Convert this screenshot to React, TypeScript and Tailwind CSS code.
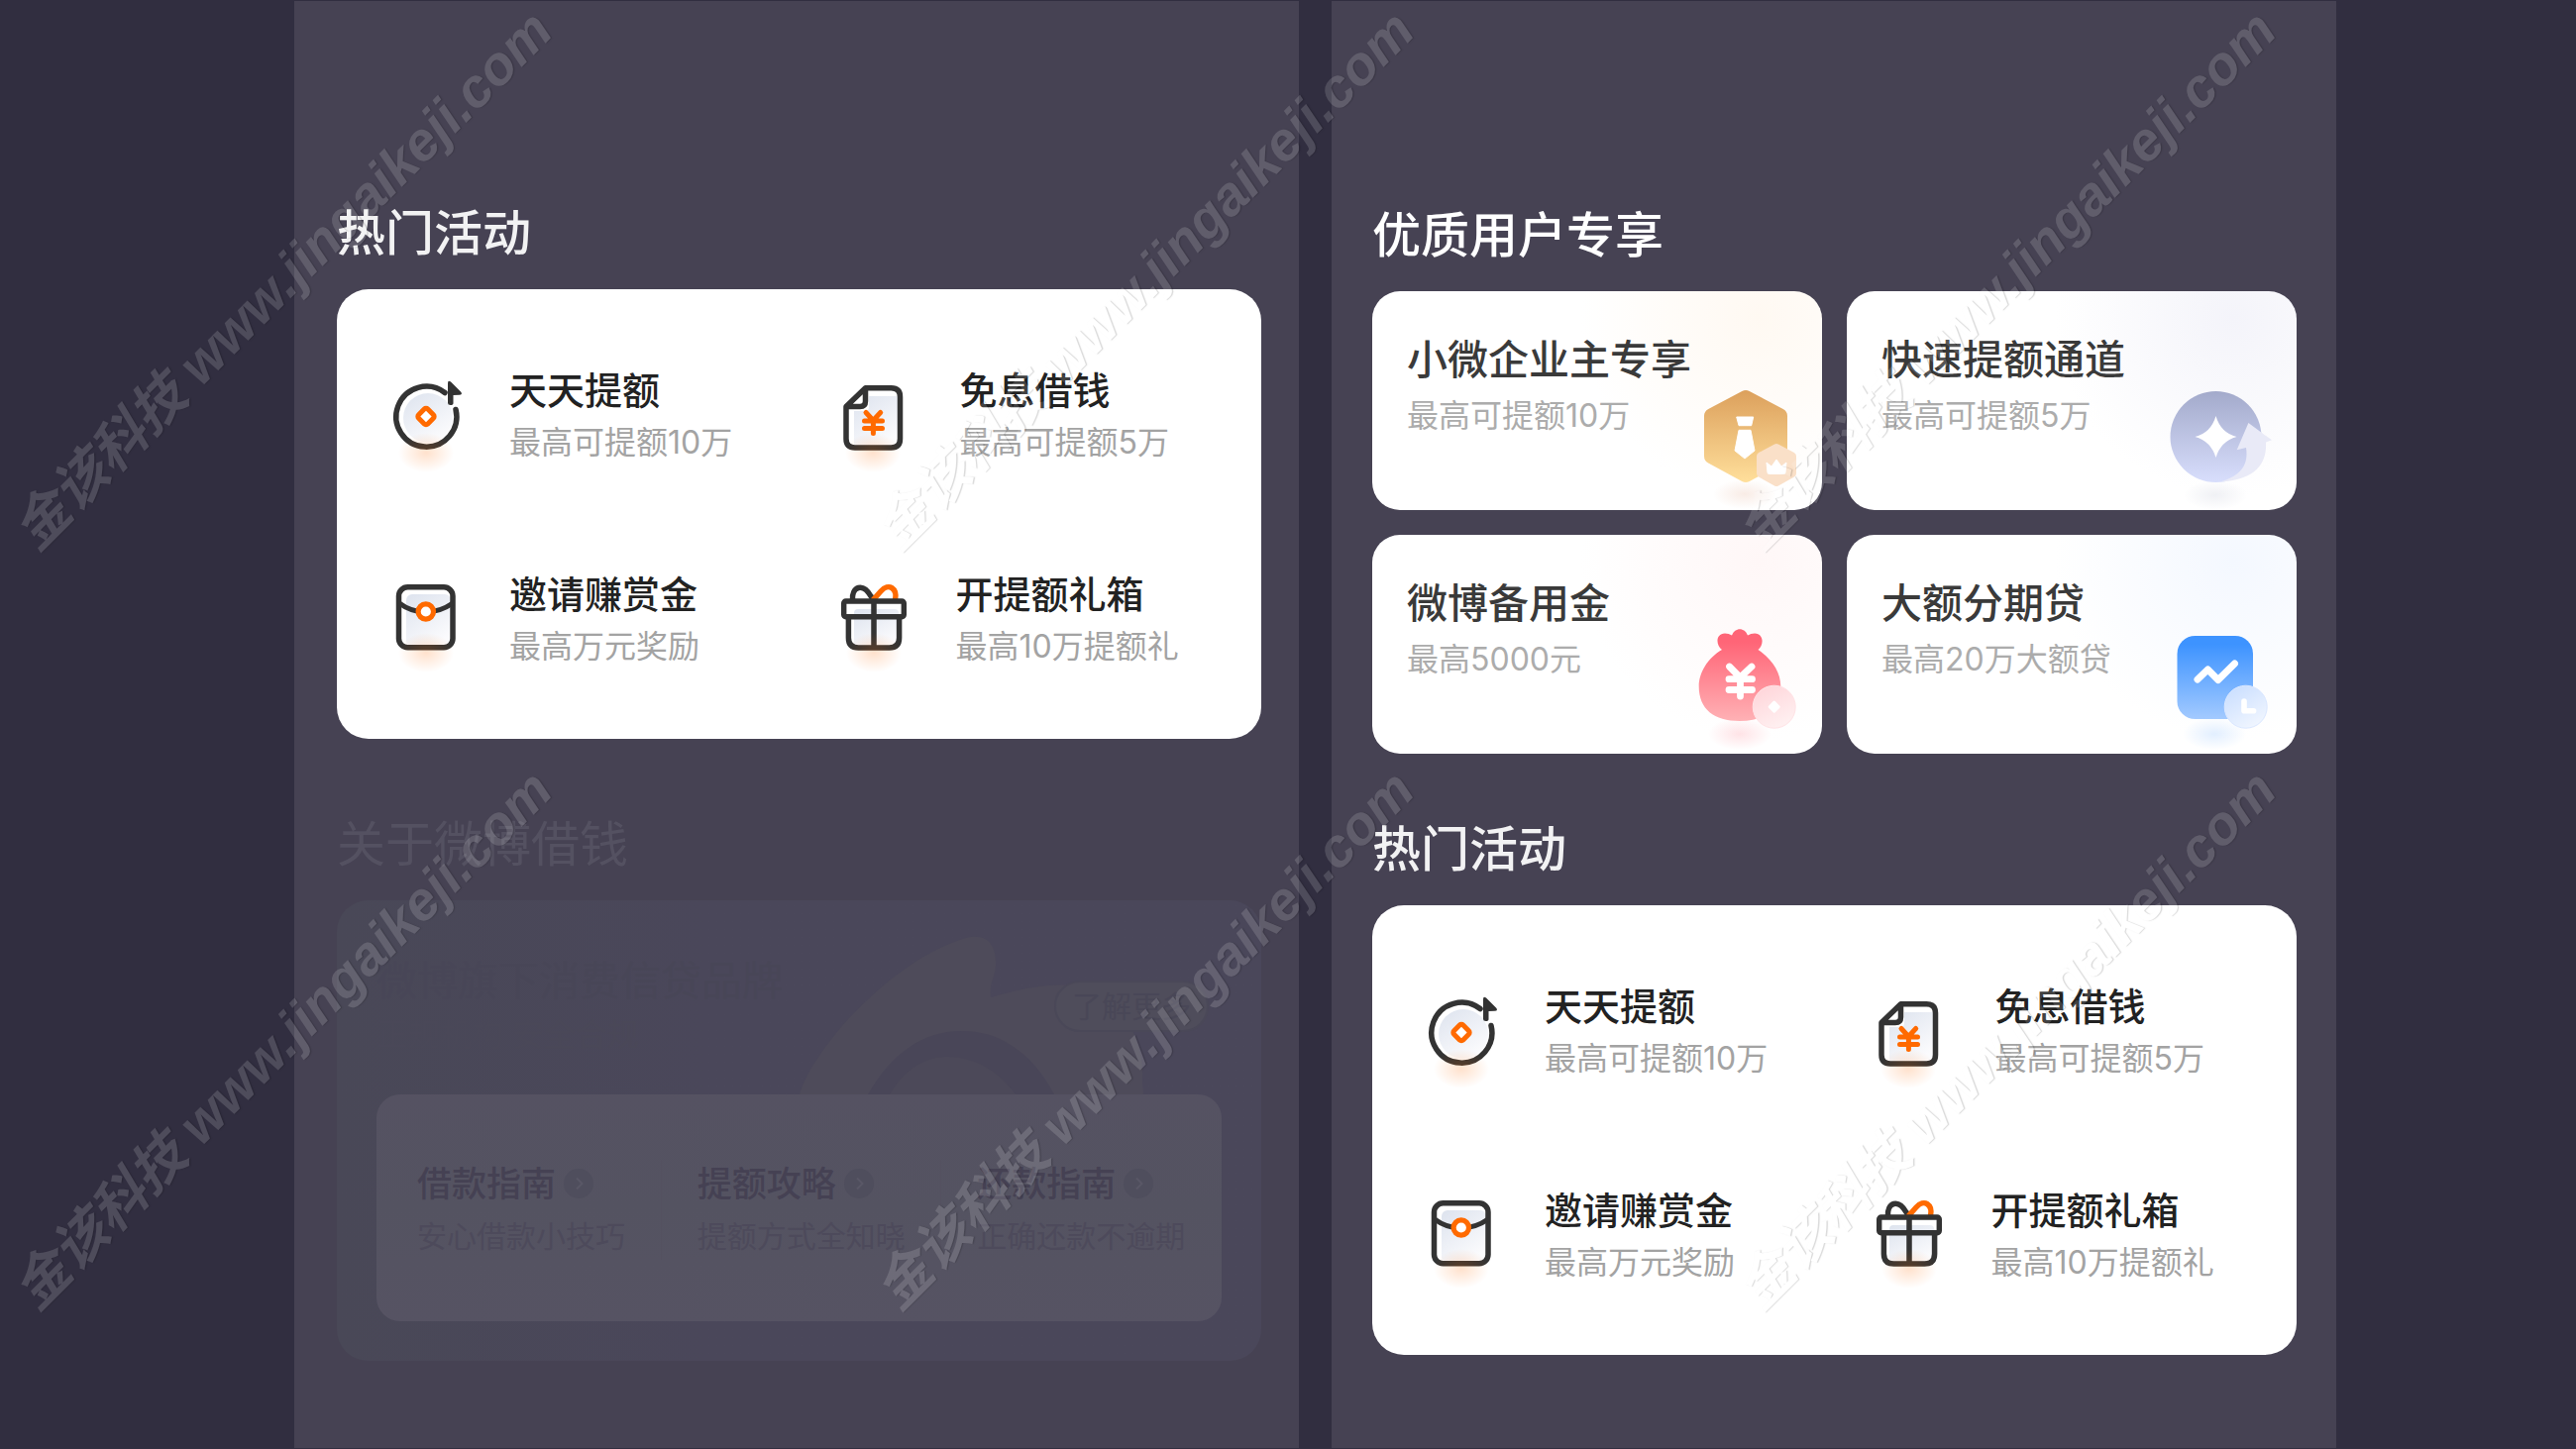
import React from "react";

const Glow = ({ id, color, cx = 48, cy = 90, rx = 28, ry = 20, opacity = 0.2 }: any) => (
  <>
    <defs>
      <radialGradient id={id}>
        <stop offset="0" stopColor={color} stopOpacity={opacity} />
        <stop offset="0.4" stopColor={color} stopOpacity={opacity * 0.6} />
        <stop offset="1" stopColor={color} stopOpacity="0" />
      </radialGradient>
    </defs>
    <ellipse cx={cx} cy={cy} rx={rx} ry={ry} fill={`url(#${id})`} />
  </>
);

const Shade = ({ id }: { id: string }) => (
  <defs>
    <linearGradient id={id} x1="0" y1="0" x2="0.6" y2="1">
      <stop offset="0" stopColor="#dde3ee" />
      <stop offset="1" stopColor="#fbfbfd" />
    </linearGradient>
  </defs>
);

const CoinIcon = ({ id }: { id: string }) => (
  <svg width="96" height="104" viewBox="0 0 96 104" fill="none" className="shrink-0 overflow-visible">
    <Shade id={`${id}-shade`} />
    <circle cx="50" cy="55" r="25" fill={`url(#${id}-shade)`} />
    <path d="M67 29.5 A30.5 30.5 0 1 0 78 46.5" stroke="#333" strokeWidth="5.5" strokeLinecap="round" />
    <path d="M70 20 Q70 16.500 73 18.500 L83 28.500 Q85.500 31.500 81.500 31.800 L75.500 32 V40 Q75.500 42 72.700 42 Q70 42 70 40 Z" fill="#333" />
    <rect x="41.500" y="47" width="13" height="13" rx="2.500" transform="rotate(45 48 53.500)" stroke="#ff6a00" strokeWidth="5" fill="#fff" />
    <Glow id={`${id}-glow`} color="#ff6a00" />
  </svg>
);

const BillIcon = ({ id }: { id: string }) => (
  <svg width="100" height="104" viewBox="0 0 100 104" fill="none" className="shrink-0 overflow-visible">
    <Shade id={`${id}-shade`} />
    <path d="M44 33 H73 V83 H29 V48 H40 Q44 48 44 44 Z" fill={`url(#${id}-shade)`} />
    <path
      d="M40.500 24.800 H66.500 Q75.500 24.800 75.500 33.800 V76 Q75.500 85 66.500 85 H30 Q21 85 21 76 V43.500 Z M40.500 24.800 V38 Q40.500 43.500 35 43.500 H21"
      stroke="#333"
      strokeWidth="5.5"
      strokeLinejoin="round"
    />
    <path d="M41 49.500 L48.300 57.500 L55.700 49.500 M39.500 58 H57.500 M39.500 65.500 H57.500 M48.400 58 V70.500" stroke="#ff6a00" strokeWidth="5" strokeLinecap="round" strokeLinejoin="round" />
    <Glow id={`${id}-glow`} color="#ff6a00" />
  </svg>
);

const EnvelopeIcon = ({ id }: { id: string }) => (
  <svg width="96" height="104" viewBox="0 0 96 104" fill="none" className="shrink-0 overflow-visible">
    <Shade id={`${id}-shade`} />
    <rect x="28" y="27" width="45" height="53" rx="6" fill={`url(#${id}-shade)`} />
    <rect x="20.500" y="19.800" width="54.500" height="61" rx="9" stroke="#333" strokeWidth="5.5" />
    <path d="M21 36 Q33 45 47.800 45 Q62 45 75 36" stroke="#333" strokeWidth="5" />
    <circle cx="47.800" cy="44.500" r="7.700" fill="#fff" stroke="#ff6a00" strokeWidth="5.2" />
    <Glow id={`${id}-glow`} color="#ff6a00" cy={86} />
  </svg>
);

const GiftIcon = ({ id }: { id: string }) => (
  <svg width="96" height="104" viewBox="0 0 96 104" fill="none" className="shrink-0 overflow-visible">
    <Shade id={`${id}-shade`} />
    <rect x="29" y="42" width="45" height="38" rx="4" fill={`url(#${id}-shade)`} />
    <path d="M27.500 33 C26.500 19 38 15 46 29 L49 33" stroke="#333" strokeWidth="5.5" />
    <path d="M48 33 L56 24 C64 15 73 21 70.500 33" stroke="#ff6a00" strokeWidth="5.5" />
    <rect x="18.700" y="34" width="60.600" height="15.700" rx="2" stroke="#333" strokeWidth="5.4" />
    <path d="M23.400 50 V71 Q23.400 81 33.400 81 H64.600 Q74.600 81 74.600 71 V50 M49 34 V81" stroke="#333" strokeWidth="5.5" />
    <Glow id={`${id}-glow`} color="#ff6a00" cx={49} cy={86} />
  </svg>
);

const BusinessIcon = () => (
  <svg width="120" height="128" viewBox="0 0 120 128" fill="none" className="shrink-0">
    <defs>
      <linearGradient id="gold" gradientUnits="userSpaceOnUse" x1="0" y1="7" x2="0" y2="100">
        <stop offset="0" stopColor="#dca05c" />
        <stop offset="1" stopColor="#ffdf9b" />
      </linearGradient>
    </defs>
    <Glow id="business-glow" color="#e0a080" cx={50} cy={112} rx={32} ry={15} opacity={0.2} />
    <path d="M51 15 L85 33 V73.500 L51 92 L17 73.500 V33 Z" fill="url(#gold)" stroke="url(#gold)" strokeWidth="16" strokeLinejoin="round" />
    <path d="M41.700 34 H58.700 L56.700 42.700 H44 Z M44 47.300 H56 L60 68 L50 76 L40 68 Z" fill="#fff" stroke="#fff" strokeLinejoin="round" />
    <path d="M82 65 L98 73.500 V91 L82 100 L66 91 V73.500 Z" fill="#fae0c8" stroke="#fae0c8" strokeWidth="8" strokeLinejoin="round" />
    <path d="M72 80 L77 84 L82 77 L87 84 L92 80 L91 90 Q91 91.500 89.500 91.500 H74.500 Q73 91.500 73 90 Z" fill="#fff" stroke="#fff" strokeLinejoin="round" />
  </svg>
);

const FastIcon = () => (
  <svg width="120" height="128" viewBox="0 0 120 128" fill="none" className="shrink-0">
    <defs>
      <linearGradient id="lilac" x1="0" y1="0" x2="0" y2="1">
        <stop offset="0" stopColor="#a3aacb" />
        <stop offset="1" stopColor="#d8defc" />
      </linearGradient>
    </defs>
    <Glow id="fast-glow" color="#8088a8" cx={46} cy={113} rx={32} ry={15} opacity={0.12} />
    <circle cx="46.500" cy="54" r="46" fill="url(#lilac)" />
    <path d="M46.500 33 Q51.500 50 67.500 54 Q51.500 58.500 46.500 75 Q41.500 58.500 25.500 54 Q41.500 50 46.500 33 Z" fill="#fff" />
    <path d="M79.400 40 L103 57.300 L97 59.500 C98 78 90 97 51 99.500 C70 94 80 84 77 65 L67.700 67.300 Z" fill="#e9eaf7" />
  </svg>
);

const BagIcon = () => (
  <svg width="120" height="128" viewBox="0 0 120 128" fill="none" className="shrink-0">
    <defs>
      <linearGradient id="rose" gradientUnits="userSpaceOnUse" x1="0" y1="15" x2="0" y2="95">
        <stop offset="0" stopColor="#ff6577" />
        <stop offset="1" stopColor="#ffb1b5" />
      </linearGradient>
      <linearGradient id="coin" x1="0" y1="0" x2="0.5" y2="1">
        <stop offset="0" stopColor="#ffd2d7" />
        <stop offset="1" stopColor="#ffeff0" />
      </linearGradient>
    </defs>
    <Glow id="bag-glow" color="#ff6577" cx={45} cy={108} rx={32} ry={16} opacity={0.18} />
    <path
      d="M27 23 C21 19 20 7 30 6.500 Q34 6.500 37 8.500 C40 0 50 0 53 8.500 Q56 6.500 60 6.500 C70 7 69 19 63.500 23 C78 33 86.300 46 86.300 60 C86.300 83 71 95 45 95 C19 95 3.700 83 3.700 60 C3.700 46 13 31 27 23 Z"
      fill="url(#rose)"
    />
    <path d="M34.500 40 L45.300 51 L57 40 M34 52.700 H57.500 M34 63.500 H57.500 M45.500 52 V70" stroke="#fff" strokeWidth="6.800" strokeLinecap="round" strokeLinejoin="round" />
    <circle cx="79.700" cy="80.700" r="21.500" fill="url(#coin)" stroke="#ffe3e6" />
    <rect x="75" y="76" width="9.400" height="9.400" rx="1.500" transform="rotate(45 79.700 80.700)" fill="#fff" />
  </svg>
);

const ChartIcon = () => (
  <svg width="120" height="128" viewBox="0 0 120 128" fill="none" className="shrink-0">
    <defs>
      <linearGradient id="azure" x1="0" y1="0.1" x2="0" y2="1">
        <stop offset="0" stopColor="#3d93ff" />
        <stop offset="1" stopColor="#a3caff" />
      </linearGradient>
      <linearGradient id="clock" x1="0" y1="0" x2="0.6" y2="1">
        <stop offset="0" stopColor="#c6dcff" />
        <stop offset="1" stopColor="#eff5ff" />
      </linearGradient>
    </defs>
    <Glow id="chart-glow" color="#3d93ff" cx={45} cy={108} rx={32} ry={16} opacity={0.15} />
    <rect x="7.500" y="9" width="76.500" height="84" rx="18" fill="url(#azure)" />
    <path d="M28 53 L38.400 43 L48.800 53.500 L65.500 37" stroke="#fff" strokeWidth="7" strokeLinecap="round" strokeLinejoin="round" />
    <circle cx="76.700" cy="80.700" r="21.500" fill="url(#clock)" stroke="#dbe8ff" />
    <path d="M75 75 V84.700 H84.600" stroke="#fff" strokeWidth="5.600" strokeLinecap="round" strokeLinejoin="round" />
  </svg>
);

const activities = [
  { title: "天天提额", desc: "最高可提额10万", Icon: CoinIcon },
  { title: "免息借钱", desc: "最高可提额5万", Icon: BillIcon },
  { title: "邀请赚赏金", desc: "最高万元奖励", Icon: EnvelopeIcon },
  { title: "开提额礼箱", desc: "最高10万提额礼", Icon: GiftIcon },
];

const benefits = [
  {
    title: "小微企业主专享",
    desc: "最高可提额10万",
    Icon: BusinessIcon,
    bg: "bg-[radial-gradient(circle_180px_at_86%_12%,#fff9f2,#ffffff)]",
  },
  {
    title: "快速提额通道",
    desc: "最高可提额5万",
    Icon: FastIcon,
    bg: "bg-[radial-gradient(circle_180px_at_86%_12%,#f4f4fa,#ffffff)]",
  },
  {
    title: "微博备用金",
    desc: "最高5000元",
    Icon: BagIcon,
    bg: "bg-[radial-gradient(circle_180px_at_86%_12%,#fff7f7,#ffffff)]",
  },
  {
    title: "大额分期贷",
    desc: "最高20万大额贷",
    Icon: ChartIcon,
    bg: "bg-[radial-gradient(circle_180px_at_86%_12%,#f4f8ff,#ffffff)]",
  },
];

const guides = [
  { title: "借款指南", desc: "安心借款小技巧" },
  { title: "提额攻略", desc: "提额方式全知晓" },
  { title: "还款指南", desc: "正确还款不逾期" },
];

const HotActivities = ({ name }: { name: string }) => (
  <section>
    <h2 className="text-[49px] leading-[56px] font-medium text-[#f2f2f3]">热门活动</h2>
    <div className="mt-7 grid grid-cols-2 gap-x-[52px] gap-y-[102px] rounded-[32px] bg-white px-[42px] pt-[75px] pb-[69px]">
      {activities.map(({ title, desc, Icon }, i) => (
        <a key={title} href="#" className="flex gap-9">
          <Icon id={`${name}-${i}`} />
          <div className="whitespace-nowrap">
            <h3 className="text-[38px] leading-[54px] font-medium text-[#222222]">{title}</h3>
            <p className="mt-[2px] text-[32px] leading-[48px] text-[#a3a3a3]">{desc}</p>
          </div>
        </a>
      ))}
    </div>
  </section>
);

const Benefits = () => (
  <section>
    <h2 className="text-[49px] leading-[56px] font-medium text-white">优质用户专享</h2>
    <div className="mt-7 grid grid-cols-2 gap-[25px]">
      {benefits.map(({ title, desc, Icon, bg }) => (
        <a
          key={title}
          href="#"
          className={`flex h-[221px] items-end justify-between rounded-[28px] pr-2 pl-[35px] ${bg}`}
        >
          <div className="self-start pt-[42px] whitespace-nowrap">
            <h3 className="text-[41px] leading-[54px] font-medium text-[#3a3a3a]">{title}</h3>
            <p className="mt-[6px] text-[32px] leading-[48px] text-[#acacac]">{desc}</p>
          </div>
          <div className="-ml-20">
            <Icon />
          </div>
        </a>
      ))}
    </div>
  </section>
);

const About = () => (
  <section>
    <h2 className="text-[49px] leading-[56px] text-[#545161]">关于微博借钱</h2>
    <div className="relative mt-7 rounded-[32px] bg-linear-to-r from-[#494857] to-[#4a475a] to-40% px-10 pt-[54px] pb-10">
      <svg width="360" height="166" viewBox="0 0 360 166" className="absolute top-[30px] left-[460px]">
        <path
          d="M7 166 C20 120 100 30 175 8 C200 2 206 20 205 36 C204 48 198 55 200 68 C225 60 260 54 280 56 C330 62 356 110 353 151 L354 166 Z"
          fill="#4e4b5a"
        />
        <path d="M76 166 C100 125 130 102 171 102 C215 102 245 130 264 166 Z" fill="#494658" />
        <path d="M98 166 C115 138 135 128 157 128 C185 128 210 145 225 166 Z" fill="#4c4959" />
      </svg>
      <div className="relative flex items-center justify-between pr-[13px]">
        <div>
          <h3 className="text-[41px] leading-[54px] text-[#484657]">微博旗下消费信贷品牌</h3>
          <p className="mt-1 text-[32px] leading-[48px] text-[#4a4858]">正规机构 安全合规</p>
        </div>
        <button className="h-[52px] rounded-full border-2 border-[#4a4858] bg-[#4f4d5b] px-4 text-[30px] leading-[48px] text-[#494757]">
          了解更多
        </button>
      </div>
      <div className="relative mt-9 grid grid-cols-3 gap-x-9 rounded-3xl bg-linear-to-b from-[#555262] via-[#545361] to-[#565363] pt-[66px] pb-[62px] pl-[41px]">
        {guides.map((guide) => (
          <a key={guide.title} href="#" className="border-r border-[#545160] whitespace-nowrap last:border-r-0">
            <div className="flex items-center gap-2">
              <h4 className="text-[35px] leading-[48px] font-medium text-[#454153]">{guide.title}</h4>
              <svg width="30" height="30" viewBox="0 0 30 30" fill="none">
                <circle cx="15" cy="15" r="15" fill="#4f4e5d" />
                <path d="M13 9.500 L18.500 15 L13 20.500" stroke="#595766" strokeWidth="2" />
              </svg>
            </div>
            <p className="mt-[5px] text-[30px] leading-[48px] text-[#4d4a5b]">{guide.desc}</p>
          </a>
        ))}
      </div>
    </div>
  </section>
);

const Watermark = () => (
  <div
    aria-hidden="true"
    className="pointer-events-none absolute inset-0 overflow-hidden font-['Liberation_Sans','Noto_Sans_CJK_SC',sans-serif] opacity-[0.14]"
  >
    {[0, 1].map((row) =>
      [0, 1, 2].map((col) => (
        <span
          key={`${row}-${col}`}
          className="absolute origin-bottom-left -rotate-45 text-[55px] leading-[56px] font-bold whitespace-nowrap text-white italic [text-shadow:1px_1px_1px_#000000]"
          style={{ left: 43 + col * 870, top: 508 + row * 767 }}
        >
          金该科技 www.jingaikeji.com
        </span>
      ))
    )}
  </div>
);

const App = () => {
  return (
    <main className="relative flex min-h-screen gap-[33px] bg-[#312e40] py-px pr-[242px] pl-[297px] font-[Inter,'Noto_Sans_CJK_SC',sans-serif]">
      <div className="flex flex-1 flex-col gap-[79px] bg-[#464253] pt-[207px] pr-[38px] pb-[86px] pl-[43px]">
        <HotActivities name="left" />
        <About />
      </div>
      <div className="flex flex-1 flex-col gap-[69px] bg-[#464253] pt-[209px] pr-10 pb-[86px] pl-[41px]">
        <Benefits />
        <HotActivities name="right" />
      </div>
      <Watermark />
    </main>
  );
};

export default App;
